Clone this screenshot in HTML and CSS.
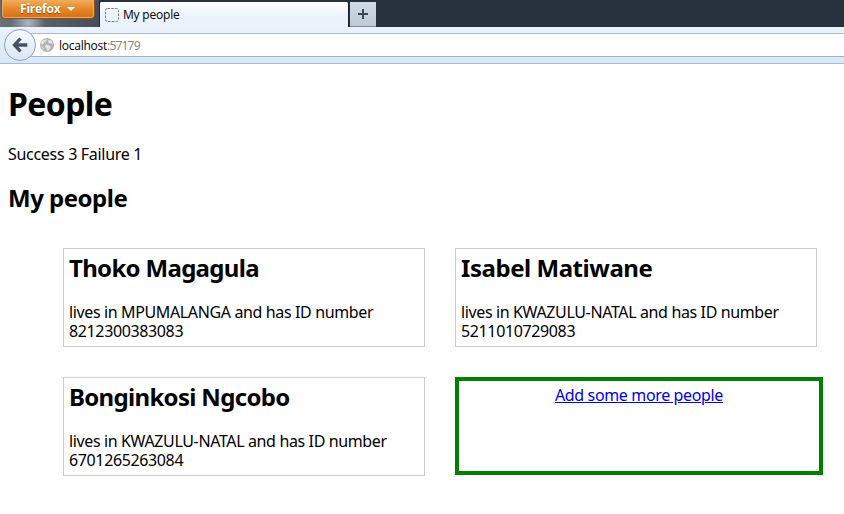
FILE: index.html
```
<!DOCTYPE html>
<html lang="en">
<head>
<meta charset="utf-8">
<title>My people</title>
<link rel="stylesheet" href="styles.css">
</head>
<body>
<header class="browser">
  <div class="tabbar">
    <div class="menu-area">
      <div class="firefox-button"><span>Firefox</span><i class="caret"></i></div>
    </div>
    <div class="tab">
      <svg class="favicon" width="14" height="14" viewBox="0 0 14 14"><rect x=".5" y=".5" width="13" height="13" rx="2" fill="none" stroke="#777" stroke-dasharray="2.5 1.2"/></svg>
      <span>My people</span>
    </div>
    <div class="new-tab">
      <svg width="10" height="10" viewBox="0 0 10 10"><path d="M5 0v10M0 5h10" stroke="#3b4856" stroke-width="2" fill="none"/></svg>
    </div>
  </div>
  <div class="toolbar">
    <div class="address">
      <svg class="globe" width="14" height="14" viewBox="0 0 14 14"><circle cx="7" cy="7" r="7" fill="#b3b3b3"/><path d="M1 4l3-2.6 3 .2-1 1.9-2 .7-.6 1.8-2 1zM8.5 2l3 .5L13 6l-1.8-.8-1.5.6-1.5-1.7zM6 6.5l3 .8 1.7 1.5-1.2 2.6-2 1.8-1-3-1.8-1.4zM1 8.3l2 .6 1 2.2-.6.6z" fill="#e5e5e5"/></svg>
      <span class="host">localhost</span><span class="port">:57179</span>
    </div>
    <div class="back">
      <svg width="16" height="16" viewBox="0 0 16 16"><path d="M8.500 1.500L2.500 8l6 6.500M3 8h12.300" stroke="#46525f" stroke-width="3.300" fill="none"/></svg>
    </div>
  </div>
</header>
<main class="page">
  <h1>People</h1>
  <p class="status">Success 3 Failure 1</p>
  <h2 class="section-title">My people</h2>
  <div class="people">
    <section class="person">
      <h2 class="wide-name">Thoko Magagula</h2>
      <p>lives in MPUMALANGA and has ID number 8212300383083</p>
    </section>
    <section class="person">
      <h2>Isabel Matiwane</h2>
      <p>lives in KWAZULU-NATAL and has ID number 5211010729083</p>
    </section>
    <section class="person">
      <h2 class="wide-name">Bonginkosi Ngcobo</h2>
      <p>lives in KWAZULU-NATAL and has ID number 6701265263084</p>
    </section>
    <section class="add"><a href="#">Add some more people</a></section>
  </div>
</main>
</body>
</html>
```
FILE: styles.css
```
* { box-sizing: border-box; }
body { margin: 0; background: #fff; color: #000; font: 16px/19px "Noto Sans", sans-serif; overflow: hidden; }
svg { display: block; flex: none; }
.browser { font: 12px/16px "Open Sans", sans-serif; height: 64px; }
.tabbar { display: flex; height: 27px; background: #28323e; }
.menu-area { width: 99px; height: 27px; padding-left: 1px; background: radial-gradient(circle at 28px 23px, #a9b7c7 0, transparent 17px), linear-gradient(90deg, #68707a, #454d58); }
.firefox-button { display: flex; align-items: center; gap: 7px; width: 94px; height: 19px; padding: 0 0 1px 18px; border: 1px solid #8e4a18; border-top: 0; border-radius: 0 0 4px 4px; background: linear-gradient(#f0ae5c, #e68a2c 45%, #d86d13); box-shadow: inset 0 -1px #f3a75b, inset 1px 0 #eeb064, inset -1px 0 #eeb064; color: #fff; font-weight: bold; letter-spacing: -.2px; text-shadow: 0 1px 1px #8c4a10; }
.caret { border: 4px solid transparent; border-top-color: #fff; border-bottom: 0; }
.tab { display: flex; align-items: center; gap: 4px; width: 250px; height: 25px; margin: 2px 0 0; border-left: 1px solid #1d2630; border-right: 1px solid #18212a; padding: 0 0 0 5px; background: linear-gradient(#fff, #eaf2fc 60%); border-radius: 2px 2px 0 0; letter-spacing: -.2px; }
.new-tab { display: flex; align-items: center; justify-content: center; width: 26px; height: 25px; margin: 2px 0 0 1px; background: linear-gradient(#d1dce8, #bdc9d5); border-bottom: 1px solid #7f8995; }
.toolbar { position: relative; height: 37px; padding-top: 6px; background: linear-gradient(#eaf2fc, #d9e7f7); border-bottom: 1px solid #a9bacd; }
.address { display: flex; align-items: center; height: 24px; margin-left: 20px; padding-left: 20px; background: #fff; border-top: 1px solid #adb9c8; border-bottom: 1px solid #a2b2c4; }
.host, .port { padding-top: 2px; }
.host { margin-left: 5px; letter-spacing: -.25px; }
.port { color: #808080; letter-spacing: -.8px; }
.back { position: absolute; left: 4px; top: 2px; display: flex; align-items: center; justify-content: center; width: 32px; height: 32px; border: 1px solid #8da3bb; border-radius: 50%; background: linear-gradient(#f4f8fd, #dce7f4); }
.page { padding: 21px 8px 0; }
h1 { margin: 0; font-size: 32px; line-height: 37px; letter-spacing: -.6px; }
h2 { margin: 0; font-size: 24px; line-height: 28px; letter-spacing: -.45px; }
p { margin: 0; }
.status { margin-top: 23px; letter-spacing: -.3px; }
.section-title { margin-top: 20px; letter-spacing: -.5px; }
.people { display: grid; grid-template-columns: 362px 368px; grid-auto-rows: 99px; gap: 30px; margin: 36px 0 0 55px; }
.person { width: 362px; padding: 5px; border: 1px solid #ccc; }
.person p { margin-top: 21px; letter-spacing: -.37px; }
.wide-name { letter-spacing: -.68px; }
.add { height: 98px; padding: 5px; border: 4px solid green; text-align: center; letter-spacing: -.36px; }
.add a { color: #00e; }
```
